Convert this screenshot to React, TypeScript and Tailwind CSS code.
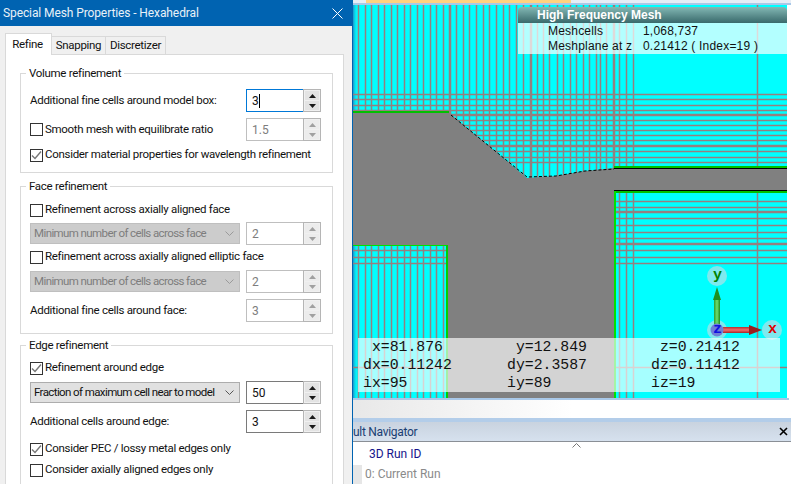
import React from "react";

const ui = { fontFamily: 'Roboto, "Noto Sans", sans-serif' };

function Arrow({ up, dim }: { up?: boolean; dim?: boolean }) {
  return (
    <svg width="7" height="4" viewBox="0 0 7 4">
      <path d={up ? "M0 4L3.5 0L7 4Z" : "M0 0L3.5 4L7 0Z"} fill={dim ? "#a0a0a0" : "#1a1a1a"} />
    </svg>
  );
}

function Spinner({ value, state = "on", caret }: { value: string; state?: "on" | "off" | "focus"; caret?: boolean }) {
  const off = state === "off";
  const inputBorder = state === "focus" ? "border-[#0078d7]" : off ? "border-[#bfbfbf]" : "border-[#7a7a7a]";
  return (
    <div className="flex w-[75px] h-[23px] shrink-0">
      <div className={`w-[57px] h-full border border-r-0 bg-white pl-[5px] flex items-center text-[12px] ${inputBorder} ${off ? "text-[#7d7d7d]" : "text-[#111]"}`}>
        <span>{value}</span>
        {caret && <span className="w-px h-[14px] bg-black" />}
      </div>
      <div className="w-[18px] h-full border border-[#b5b5b5] bg-[#f0f0f0] flex flex-col justify-between p-px">
        <div className={`h-[9px] flex items-center justify-center ${off ? "bg-[#ececec]" : "bg-[#e3e3e3]"}`}><Arrow up dim={off} /></div>
        <div className={`h-[9px] flex items-center justify-center ${off ? "bg-[#ececec]" : "bg-[#e3e3e3]"}`}><Arrow dim={off} /></div>
      </div>
    </div>
  );
}

function Check({ checked, label, className = "" }: { checked?: boolean; label: string; className?: string }) {
  return (
    <div className={`flex items-center h-[16px] text-[11.5px] tracking-[-0.3px] text-[#111] ${className}`}>
      <div className="w-[13px] h-[13px] border border-[#333] bg-white mr-[2px] shrink-0 flex items-center justify-center">
        {checked && (
          <svg width="11" height="11" viewBox="0 0 11 11">
            <path d="M1 5.5L4 8.5L10 1.5" fill="none" stroke="#777" strokeWidth="1.4" />
          </svg>
        )}
      </div>
      <span className="whitespace-nowrap">{label}</span>
    </div>
  );
}

function Select({ label, off }: { label: string; off?: boolean }) {
  return (
    <div className={`w-[210px] h-[21px] border flex items-center pl-[3px] pr-[4px] text-[11.5px] tracking-[-0.6px] shrink-0 ${off ? "bg-[#cccccc] border-[#bfbfbf] text-[#7d7d7d]" : "bg-[#e1e1e1] border-[#adadad] text-[#111]"}`}>
      <span className="flex-1 whitespace-nowrap">{label}</span>
      <svg width="9" height="6" viewBox="0 0 9 6" className="mr-[1px]">
        <path d="M0.5 0.5L4.5 4.5L8.5 0.5" fill="none" stroke={off ? "#9a9a9a" : "#555"} strokeWidth="1" />
      </svg>
    </div>
  );
}

function Group({ title, h, className = "", children }: { title: string; h: string; className?: string; children: React.ReactNode }) {
  return (
    <div className={`relative w-[313px] border border-[#d9d9d9] pl-[9px] pr-[11px] ${h} ${className}`}>
      <span className="absolute left-[5px] top-[-9px] bg-white px-[3px] text-[11.5px] tracking-[-0.3px] leading-[16px] text-[#111] whitespace-nowrap">{title}</span>
      {children}
    </div>
  );
}

function Row({ children, className = "" }: { children: React.ReactNode; className?: string }) {
  return <div className={`flex items-center justify-between ${className}`}>{children}</div>;
}

function Label({ children }: { children: React.ReactNode }) {
  return <span className="text-[11.5px] tracking-[-0.3px] text-[#111] whitespace-nowrap">{children}</span>;
}

function Dialog() {
  return (
    <div className="w-[353px] h-full shrink-0 flex flex-col bg-[#f0f0f0] border-r border-[#0063b1] overflow-hidden" style={ui}>
      <div className="h-[26px] shrink-0 bg-[#0063b1] flex items-center justify-between pl-[3px] pr-[9px] text-white text-[12px] tracking-[-0.1px] whitespace-nowrap">
        <span className="text-[#e8f1f8]">Special Mesh Properties - Hexahedral</span>
        <svg width="11" height="11" viewBox="0 0 11 11"><path d="M0.5 0.5L10.5 10.5M10.5 0.5L0.5 10.5" stroke="#fff" strokeWidth="1" /></svg>
      </div>
      <div className="flex items-end pl-[5px] h-[28px] shrink-0 text-[11.5px] tracking-[-0.3px] text-[#111]">
        <div className="w-[47px] h-[22px] bg-white border border-b-0 border-[#d9d9d9] flex items-center justify-center pr-[2px] relative top-px z-10">Refine</div>
        <div className="w-[54px] h-[18px] bg-[#f0f0f0] border border-l-0 border-b-0 border-[#d9d9d9] flex items-center justify-center">Snapping</div>
        <div className="w-[60px] h-[18px] bg-[#f0f0f0] border border-l-0 border-b-0 border-[#d9d9d9] flex items-center justify-center">Discretizer</div>
      </div>
      <div className="ml-[5px] w-[339px] flex-1 bg-white border border-[#d9d9d9] border-b-0 pl-[14px] pt-[18px]">
        <Group title="Volume refinement" h="h-[100px]" className="pt-[15px]">
          <Row>
            <Label>Additional fine cells around model box:</Label>
            <Spinner value="3" state="focus" caret />
          </Row>
          <Row className="mt-[6px]">
            <Check label="Smooth mesh with equilibrate ratio" />
            <Spinner value="1.5" state="off" />
          </Row>
          <Check checked label="Consider material properties for wavelength refinement" className="mt-[6px]" />
        </Group>
        <Group title="Face refinement" h="h-[148px]" className="mt-[13px] pt-[15px]">
          <Check label="Refinement across axially aligned face" />
          <Row className="mt-[4px]">
            <Select off label="Minimum number of cells across face" />
            <Spinner value="2" state="off" />
          </Row>
          <Check label="Refinement across axially aligned elliptic face" className="mt-[4px]" />
          <Row className="mt-[5px]">
            <Select off label="Minimum number of cells across face" />
            <Spinner value="2" state="off" />
          </Row>
          <Row className="mt-[6px]">
            <Label>Additional fine cells around face:</Label>
            <Spinner value="3" state="off" />
          </Row>
        </Group>
        <Group title="Edge refinement" h="h-[160px]" className="mt-[11px] pt-[14px]">
          <Check checked label="Refinement around edge" />
          <Row className="mt-[5px]">
            <Select label="Fraction of maximum cell near to model" />
            <Spinner value="50" />
          </Row>
          <Row className="mt-[6px]">
            <Label>Additional cells around edge:</Label>
            <Spinner value="3" />
          </Row>
          <Check checked label="Consider PEC / lossy metal edges only" className="mt-[8px]" />
          <Check label="Consider axially aligned edges only" className="mt-[5px]" />
        </Group>
      </div>
    </div>
  );
}

const thinV = [358,365,371,378,384,391,397,404,410,417,423,430,436,443,456,463,469,476,483,489,496,503,509,516,523,537,543,549,557,563,570,576,583,589,596,600,606,619,626,633,757];
const thickV = [450,531,614];
const thinH = [94,99,105,110,120,125,130,135,140,151,157,162,201,207,218,225,232,238,250,257,263,367];
const thickH = [115,146,212,244];
const meshLine = "#957f7f";

function Mesh() {
  // viewBox uses page coordinates so the strokes can be read against the reference
  return (
    <svg className="absolute inset-0 w-full h-full" viewBox="353 5 434 393">
      <defs>
        <linearGradient id="edgeFade" x1="0" x2="1" y1="0" y2="0">
          <stop offset="0" stopColor="#1f8fc8" />
          <stop offset="1" stopColor="#00ffff" stopOpacity="0" />
        </linearGradient>
      </defs>
      <rect x="353" y="5" width="434" height="393" fill="#00ffff" />
      <rect x="353" y="5" width="5" height="393" fill="url(#edgeFade)" />
      {thinV.map((x) => <line key={x} x1={x + 0.5} x2={x + 0.5} y1="5" y2="398" stroke={meshLine} strokeWidth="1.5" />)}
      {thickV.map((x) => <line key={x} x1={x} x2={x} y1="5" y2="398" stroke={meshLine} strokeWidth="2.5" />)}
      {thinH.map((y) => <line key={y} x1="353" x2="787" y1={y + 0.5} y2={y + 0.5} stroke={meshLine} strokeWidth="1.5" />)}
      {thickH.map((y) => <line key={y} x1="353" x2="787" y1={y} y2={y} stroke={meshLine} strokeWidth="2.5" />)}
      <path d="M353 113H449L527 178L556 176L585 171L614 168H787V191H615V398H447V246H353Z" fill="#808080" />
      <rect x="353" y="111" width="96" height="2" fill="#00c000" />
      <rect x="614" y="166" width="173" height="2" fill="#00c000" />
      <rect x="614" y="168" width="173" height="1" fill="#000" />
      <rect x="614" y="190" width="173" height="1" fill="#000" />
      <rect x="614" y="191" width="173" height="2" fill="#00c000" />
      <rect x="614" y="191" width="2" height="207" fill="#00e000" />
      <rect x="353" y="245" width="94" height="1" fill="#00e000" />
      <rect x="446" y="245" width="2" height="153" fill="#00d000" />
      <path d="M451 115L527 177L556 176L585 171L614 169" fill="none" stroke="#000" strokeWidth="1" strokeDasharray="3 2" />
    </svg>
  );
}

function Axes() {
  return (
    <svg className="absolute left-[340px] top-[255px]" width="90" height="90" viewBox="0 0 90 90">
      <defs>
        <linearGradient id="yShaft" x1="0" x2="1" y1="0" y2="0">
          <stop offset="0" stopColor="#2f9a2f" />
          <stop offset="0.5" stopColor="#6fe06f" />
          <stop offset="1" stopColor="#1f8a1f" />
        </linearGradient>
        <linearGradient id="xShaft" x1="0" x2="0" y1="0" y2="1">
          <stop offset="0" stopColor="#b83030" />
          <stop offset="0.5" stopColor="#f07070" />
          <stop offset="1" stopColor="#a82828" />
        </linearGradient>
      </defs>
      <circle cx="24" cy="16" r="10" fill="#7fe9ee" />
      <circle cx="79" cy="70" r="10" fill="#7fe9ee" />
      <circle cx="24" cy="70" r="10" fill="#7fe9ee" />
      <rect x="21" y="40" width="6" height="28" fill="url(#yShaft)" />
      <path d="M24 27L28 40H20Z" fill="#1f8f1f" />
      <rect x="30" y="67" width="30" height="6" fill="url(#xShaft)" />
      <path d="M69 70L56 65V75Z" fill="#9a1f1f" />
      <circle cx="24" cy="70" r="6.5" fill="#6f7fd6" />
    </svg>
  );
}

function Viewport() {
  return (
    <div className="relative w-[434px] h-[393px] shrink-0 overflow-hidden">
      <Mesh />
      <Axes />
      <div className="absolute left-[165px] top-[2px] w-[269px] h-[47px] text-[12px] tracking-[0.2px] text-[#111]" style={{ fontFamily: '"Liberation Sans", sans-serif' }}>
        <div className="h-[16px] rounded-t-[4px] bg-gradient-to-b from-[#84b9b5] to-[#396a6c] pl-[19px] font-bold leading-[16px] tracking-normal text-white">High Frequency Mesh</div>
        <div className="h-[31px] bg-white/70 pl-[30px] leading-[15px] pt-px">
          <div className="flex"><span className="w-[95px]">Meshcells</span><span>1,068,737</span></div>
          <div className="flex"><span className="w-[95px]">Meshplane at z</span><span>0.21412 ( Index=19 )</span></div>
        </div>
      </div>
      <div className="absolute left-[5px] top-[333px] w-[422px] h-[54px] bg-white/65 grid grid-cols-[144px_144px_1fr] pl-[5px] text-[14.8px] leading-[18px] text-[#111] whitespace-pre" style={{ fontFamily: '"Liberation Mono", monospace' }}>
        <span>{" x=81.876"}</span><span>{" y=12.849"}</span><span>{" z=0.21412"}</span>
        <span>dx=0.11242</span><span>dy=2.3587</span><span>dz=0.11412</span>
        <span>ix=95</span><span>iy=89</span><span>iz=19</span>
      </div>
      <span className="absolute left-[360px] top-[261px] text-[15px] font-bold leading-[20px] text-[#008000]" style={{ fontFamily: '"Liberation Mono", monospace' }}>y</span>
      <span className="absolute left-[360px] top-[315px] text-[15px] font-bold leading-[20px] text-[#1010e0]" style={{ fontFamily: '"Liberation Mono", monospace' }}>z</span>
      <span className="absolute left-[415px] top-[315px] text-[15px] font-bold leading-[20px] text-[#e00000]" style={{ fontFamily: '"Liberation Mono", monospace' }}>x</span>
    </div>
  );
}

function Navigator() {
  return (
    <div className="flex-1 flex flex-col" style={ui}>
      <div className="h-[4px] bg-[#b3cde9]" />
      <div className="h-[20px] flex items-center justify-between bg-gradient-to-b from-[#c9d3df] to-[#d6e1ee] pr-[3px] text-[12px] text-[#1a3e73] border-b border-[#8a8f96]">
        <span className="whitespace-nowrap tracking-[-0.3px]">ult Navigator</span>
        <svg width="9" height="9" viewBox="0 0 9 9"><path d="M1 1L8 8M8 1L1 8" stroke="#000" strokeWidth="1.6" /></svg>
      </div>
      <div className="relative flex-1 bg-white text-[12px] overflow-hidden mr-[3px]">
        <svg className="absolute left-[219px] top-[1px]" width="9" height="5" viewBox="0 0 9 5"><path d="M0.5 4.5L4.5 0.5L8.5 4.5" fill="none" stroke="#777" /></svg>
        <div className="h-[23px] flex items-center pl-[16px] text-[#14148c]">3D Run ID</div>
        <div className="flex h-[20px]">
          <div className="w-[9px] bg-[#e6e6e6]" />
          <span className="pl-[3px] text-[#8a8a8a] whitespace-nowrap">0: Current Run</span>
        </div>
      </div>
    </div>
  );
}

export default function App() {
  return (
    <div className="w-[791px] h-[484px] flex overflow-hidden bg-white">
      <Dialog />
      <div className="flex-1 min-w-0 flex flex-col">
        <div className="h-[5px] shrink-0 bg-[#e6edf6] border-b-2 border-[#a9c8e8]">
          <div className="ml-[13px] w-[205px] h-[3px] bg-[#ffd27f]" />
        </div>
        <Viewport />
        <div className="h-[2px] shrink-0 w-[436px] bg-[#a9c8e8]" />
        <div className="h-[18px] shrink-0 bg-gradient-to-r from-[#e8e8e8] via-white to-white" />
        <Navigator />
      </div>
    </div>
  );
}
